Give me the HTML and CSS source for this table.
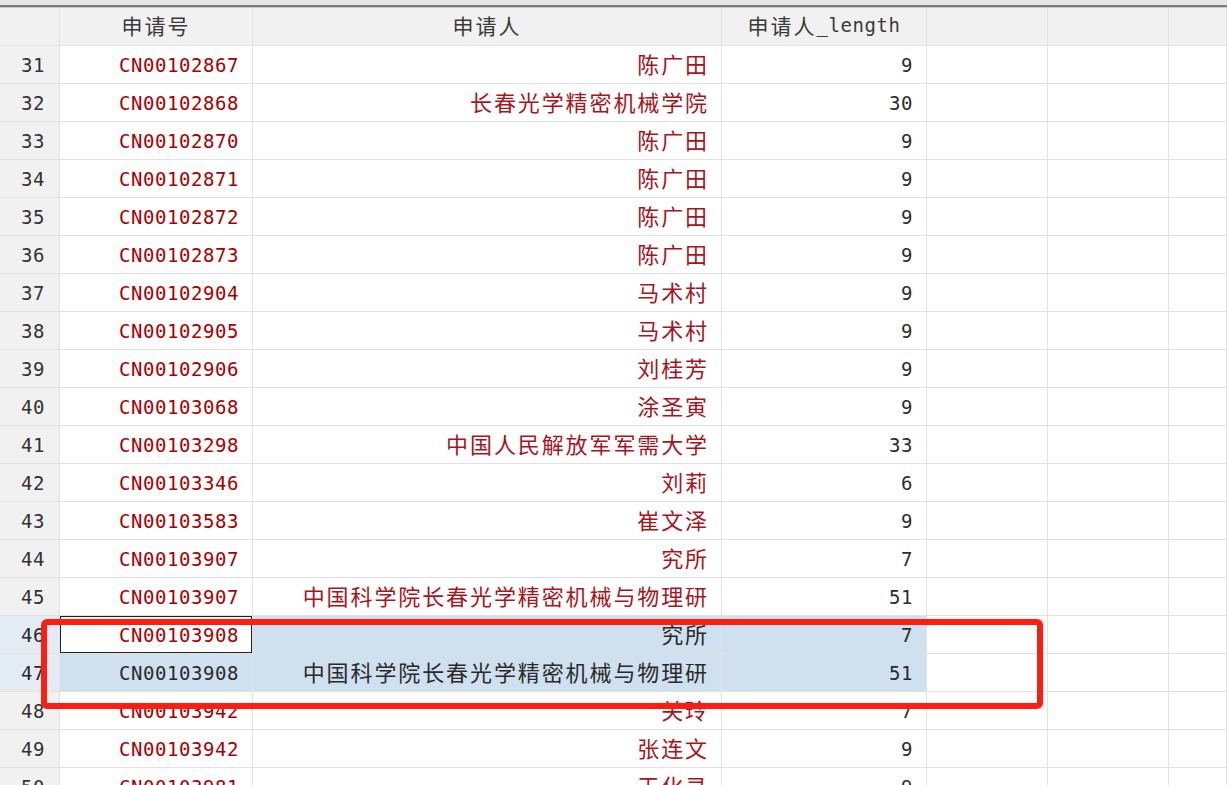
FILE: index.html
```html
<!DOCTYPE html>
<html lang="zh">
<head>
<meta charset="utf-8">
<title>Data Editor</title>
<link rel="stylesheet" href="styles.css">
</head>
<body>
<div class="editor">
  <div class="topbar"></div>
  <div class="grid">
    <div class="row head">
      <div class="c n"></div>
      <div class="c h">申请号</div>
      <div class="c h">申请人</div>
      <div class="c h">申请人<span class="m">_length</span></div>
      <div class="c"></div><div class="c"></div><div class="c"></div>
    </div>
    <div class="row"><div class="c n">31</div><div class="c id">CN00102867</div><div class="c nm">陈广田</div><div class="c len">9</div><div class="c"></div><div class="c"></div><div class="c"></div></div>
    <div class="row"><div class="c n">32</div><div class="c id">CN00102868</div><div class="c nm">长春光学精密机械学院</div><div class="c len">30</div><div class="c"></div><div class="c"></div><div class="c"></div></div>
    <div class="row"><div class="c n">33</div><div class="c id">CN00102870</div><div class="c nm">陈广田</div><div class="c len">9</div><div class="c"></div><div class="c"></div><div class="c"></div></div>
    <div class="row"><div class="c n">34</div><div class="c id">CN00102871</div><div class="c nm">陈广田</div><div class="c len">9</div><div class="c"></div><div class="c"></div><div class="c"></div></div>
    <div class="row"><div class="c n">35</div><div class="c id">CN00102872</div><div class="c nm">陈广田</div><div class="c len">9</div><div class="c"></div><div class="c"></div><div class="c"></div></div>
    <div class="row"><div class="c n">36</div><div class="c id">CN00102873</div><div class="c nm">陈广田</div><div class="c len">9</div><div class="c"></div><div class="c"></div><div class="c"></div></div>
    <div class="row"><div class="c n">37</div><div class="c id">CN00102904</div><div class="c nm">马术村</div><div class="c len">9</div><div class="c"></div><div class="c"></div><div class="c"></div></div>
    <div class="row"><div class="c n">38</div><div class="c id">CN00102905</div><div class="c nm">马术村</div><div class="c len">9</div><div class="c"></div><div class="c"></div><div class="c"></div></div>
    <div class="row"><div class="c n">39</div><div class="c id">CN00102906</div><div class="c nm">刘桂芳</div><div class="c len">9</div><div class="c"></div><div class="c"></div><div class="c"></div></div>
    <div class="row"><div class="c n">40</div><div class="c id">CN00103068</div><div class="c nm">涂圣寅</div><div class="c len">9</div><div class="c"></div><div class="c"></div><div class="c"></div></div>
    <div class="row"><div class="c n">41</div><div class="c id">CN00103298</div><div class="c nm">中国人民解放军军需大学</div><div class="c len">33</div><div class="c"></div><div class="c"></div><div class="c"></div></div>
    <div class="row"><div class="c n">42</div><div class="c id">CN00103346</div><div class="c nm">刘莉</div><div class="c len">6</div><div class="c"></div><div class="c"></div><div class="c"></div></div>
    <div class="row"><div class="c n">43</div><div class="c id">CN00103583</div><div class="c nm">崔文泽</div><div class="c len">9</div><div class="c"></div><div class="c"></div><div class="c"></div></div>
    <div class="row"><div class="c n">44</div><div class="c id">CN00103907</div><div class="c nm">究所</div><div class="c len">7</div><div class="c"></div><div class="c"></div><div class="c"></div></div>
    <div class="row"><div class="c n">45</div><div class="c id">CN00103907</div><div class="c nm">中国科学院长春光学精密机械与物理研</div><div class="c len">51</div><div class="c"></div><div class="c"></div><div class="c"></div></div>
    <div class="row sel"><div class="c n">46</div><div class="c id active">CN00103908</div><div class="c nm">究所</div><div class="c len">7</div><div class="c"></div><div class="c"></div><div class="c"></div></div>
    <div class="row sel"><div class="c n">47</div><div class="c id">CN00103908</div><div class="c nm">中国科学院长春光学精密机械与物理研</div><div class="c len">51</div><div class="c"></div><div class="c"></div><div class="c"></div></div>
    <div class="row"><div class="c n">48</div><div class="c id">CN00103942</div><div class="c nm">关玲</div><div class="c len">7</div><div class="c"></div><div class="c"></div><div class="c"></div></div>
    <div class="row"><div class="c n">49</div><div class="c id">CN00103942</div><div class="c nm">张连文</div><div class="c len">9</div><div class="c"></div><div class="c"></div><div class="c"></div></div>
    <div class="row"><div class="c n">50</div><div class="c id">CN00103981</div><div class="c nm">王化录</div><div class="c len">9</div><div class="c"></div><div class="c"></div><div class="c"></div></div>
  </div>
  <div class="mark"></div>
</div>
</body>
</html>
```
FILE: styles.css
```css
html, body {
  margin: 0;
  padding: 0;
  background: #ffffff;
  overflow: hidden;
}
.editor {
  position: relative;
  width: 1227px;
  height: 785px;
  overflow: hidden;
}
.topbar {
  height: 5px;
  background: #e6e6e6;
  border-bottom: 2px solid #7c7c7c;
  box-shadow: 0 1px 0 #c8c8c8;
  margin-bottom: 1px;
}
.row {
  display: grid;
  grid-template-columns: 60px 193px 469px 205px 121px 121px 1fr;
  height: 38px;
}
.c {
  box-sizing: border-box;
  border-right: 1px solid #e2e2e2;
  border-bottom: 1px solid #e2e2e2;
  display: flex;
  align-items: center;
  justify-content: flex-end;
  padding-right: 13px;
  white-space: nowrap;
  overflow: hidden;
  font-family: "DejaVu Sans Mono", "Liberation Mono", monospace;
  font-size: 19px;
  letter-spacing: 0.55px;
  color: #333333;
}
.head .c {
  background: #f1f1f1;
}
.c.h {
  justify-content: center;
  padding-right: 0;
  padding-bottom: 3px;
  font-family: "Noto Sans CJK SC", sans-serif;
  font-size: 21px;
  letter-spacing: 2px;
  color: #3a3a3a;
}
.c.h .m {
  font-family: "DejaVu Sans Mono", monospace;
  font-size: 19px;
  letter-spacing: 0.55px;
}
.c.n {
  background: #f1f1f1;
  padding-right: 14px;
  color: #333333;
}
.c.id {
  color: #a80000;
}
.c.nm {
  font-family: "Noto Sans CJK SC", sans-serif;
  font-size: 22px;
  letter-spacing: 1.9px;
  padding-right: 12px;
  padding-bottom: 3px;
  color: #a8141c;
}
.c.len {
  color: #2c2c2c;
}
.sel .c:nth-child(-n+4) {
  background: #cfe0ef;
  color: #2a2a2a;
}
.sel .c.n {
  background: #e3ecf5;
}
.sel .c.active {
  background: #ffffff;
  color: #a80000;
  box-shadow: inset 0 0 0 1px #222222;
}
.mark {
  position: absolute;
  left: 41px;
  top: 619px;
  width: 1002px;
  height: 90px;
  box-sizing: border-box;
  border: 6px solid #ff1d12;
  border-radius: 6px;
}
```
